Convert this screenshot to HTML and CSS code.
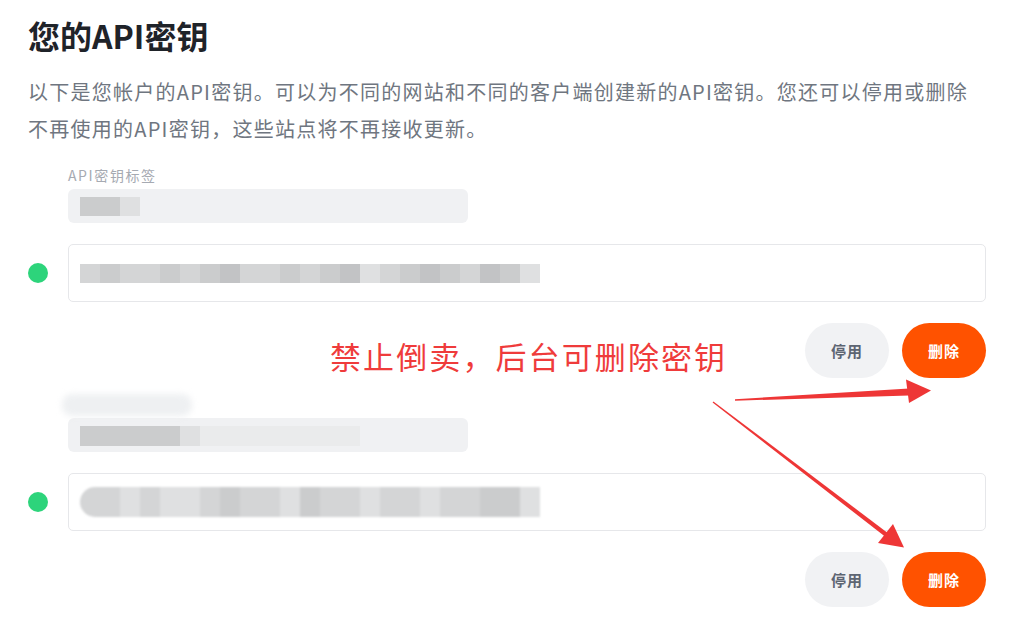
FILE: index.html
```html
<!DOCTYPE html>
<html>
  <head>
    <meta charset="utf-8" />
    <title>您的API密钥</title>
    <link rel="stylesheet" href="styles.css">
  </head>
  <body>
    <div class="page">
      <h1 class="title">您的API密钥</h1>
      <p class="intro">
        以下是您帐户的API密钥。可以为不同的网站和不同的客户端创建新的API密钥。您还可以停用或删除不再使用的API密钥，这些站点将不再接收更新。
      </p>

      <div class="key-group">
        <div class="key-label">API密钥标签</div>
        <div class="label-field">
          <div class="mosaic short">
            <span class="m2"></span><span class="m2"></span><span class="m4"></span>
          </div>
        </div>
        <div class="key-row">
          <span class="dot"></span>
          <div class="key-field">
            <div class="mosaic">
              <span class="m3"></span><span class="m2"></span><span class="m3"></span><span class="m3"></span>
              <span class="m2"></span><span class="m3"></span><span class="m2"></span><span class="m1"></span>
              <span class="m3"></span><span class="m3"></span><span class="m2"></span><span class="m3"></span>
              <span class="m2"></span><span class="m1"></span><span class="m4"></span><span class="m3"></span>
              <span class="m2"></span><span class="m1"></span><span class="m2"></span><span class="m3"></span>
              <span class="m1"></span><span class="m2"></span><span class="m4"></span>
            </div>
          </div>
        </div>
        <div class="key-actions">
          <button class="btn btn-disable">停用</button>
          <button class="btn btn-delete">删除</button>
        </div>
      </div>

      <div class="key-group">
        <div class="key-label blurred"><span class="smudge"></span></div>
        <div class="label-field">
          <div class="mosaic wide">
            <span class="m2"></span><span class="m2"></span><span class="m2"></span><span class="m2"></span>
            <span class="m2"></span><span class="m4"></span><span class="m5"></span><span class="m5"></span>
            <span class="m5"></span><span class="m5"></span><span class="m5"></span><span class="m5"></span>
            <span class="m5"></span><span class="m5"></span>
          </div>
        </div>
        <div class="key-row">
          <span class="dot"></span>
          <div class="key-field">
            <div class="mosaic soft">
              <span class="m3"></span><span class="m3"></span><span class="m4"></span><span class="m3"></span>
              <span class="m4"></span><span class="m4"></span><span class="m3"></span><span class="m2"></span>
              <span class="m3"></span><span class="m3"></span><span class="m4"></span><span class="m2"></span>
              <span class="m3"></span><span class="m3"></span><span class="m4"></span><span class="m3"></span>
              <span class="m3"></span><span class="m4"></span><span class="m3"></span><span class="m3"></span>
              <span class="m2"></span><span class="m2"></span><span class="m4"></span>
            </div>
          </div>
        </div>
        <div class="key-actions">
          <button class="btn btn-disable">停用</button>
          <button class="btn btn-delete">删除</button>
        </div>
      </div>

      <div class="note">禁止倒卖，后台可删除密钥</div>
      <svg class="arrows" width="1017" height="625" viewBox="0 0 1017 625">
        <polygon points="735,399.3 909,388.5 909,395.5 735,400.7" />
        <polygon points="906,379.5 931,390.5 909,403" />
        <polygon points="712.6,402.6 886.6,537.8 889.4,534.2 713.4,401.4" />
        <polygon points="878,543 904,547.5 893,524" />
      </svg>
    </div>
  </body>
</html>
```

FILE: styles.css
```css
body {
  margin: 0;
  background: #fff;
  font-family: "Noto Sans CJK SC", "Noto Sans", sans-serif;
}

.page {
  position: relative;
  padding: 16px 31px 0 28px;
}

.title {
  margin: 0;
  font-size: 32px;
  line-height: 38px;
  font-weight: 700;
  color: #1f2329;
}

.intro {
  margin: 20px 0 0;
  font-size: 20px;
  line-height: 36.5px;
  color: #6f7680;
  letter-spacing: 1.25px;
}

.key-group {
  margin-top: 18px;
}

.key-group + .key-group {
  margin-top: 16px;
}

.key-label {
  margin-left: 40px;
  height: 20px;
  font-size: 14px;
  line-height: 20px;
  letter-spacing: 1.6px;
  color: #a6aab2;
}

.key-label.blurred {
  position: relative;
}

.smudge {
  display: block;
  width: 130px;
  height: 22px;
  margin-left: -6px;
  border-radius: 10px;
  background: #eef0f2;
  filter: blur(3px);
}

.label-field {
  margin: 4px 0 0 40px;
  width: 400px;
  height: 34px;
  border-radius: 6px;
  background: #f0f1f3;
  display: flex;
  align-items: center;
  padding-left: 12px;
  box-sizing: border-box;
}

.key-row {
  display: flex;
  align-items: center;
  margin-top: 21px;
}

.dot {
  width: 20px;
  height: 20px;
  border-radius: 50%;
  background: #2dd47b;
  margin-right: 20px;
  flex: none;
}

.key-field {
  flex: 1;
  height: 58px;
  border: 1px solid #e6e7ea;
  border-radius: 5px;
  box-sizing: border-box;
  display: flex;
  align-items: center;
  padding-left: 11px;
}

.mosaic {
  display: flex;
  height: 19px;
}

.mosaic span {
  width: 20px;
  height: 100%;
}

.mosaic.short span {
  height: 19px;
}

.mosaic.wide span {
  height: 20px;
}

.mosaic.soft {
  height: 30px;
  border-radius: 15px 0 0 15px;
  overflow: hidden;
  filter: blur(1px);
}

.m1 { background: #c2c3c5; }
.m2 { background: #cbcccd; }
.m3 { background: #d4d5d6; }
.m4 { background: #dfe0e1; }
.m5 { background: #eaebec; }

.key-actions {
  display: flex;
  justify-content: flex-end;
  gap: 13px;
  margin-top: 21px;
}

.btn {
  width: 84px;
  height: 55px;
  border: none;
  border-radius: 28px;
  font-family: inherit;
  font-size: 15px;
  font-weight: 700;
  letter-spacing: 1px;
  outline: none;
}

.btn-disable {
  background: #f1f2f4;
  color: #5d6572;
}

.btn-delete {
  background: #ff5200;
  color: #fff;
}

.note {
  position: absolute;
  left: 330px;
  top: 336px;
  font-size: 31px;
  line-height: 40px;
  letter-spacing: 2.1px;
  color: #ef3b3b;
}

.arrows {
  position: absolute;
  left: 0;
  top: 0;
  fill: #ee3636;
  pointer-events: none;
}
```
